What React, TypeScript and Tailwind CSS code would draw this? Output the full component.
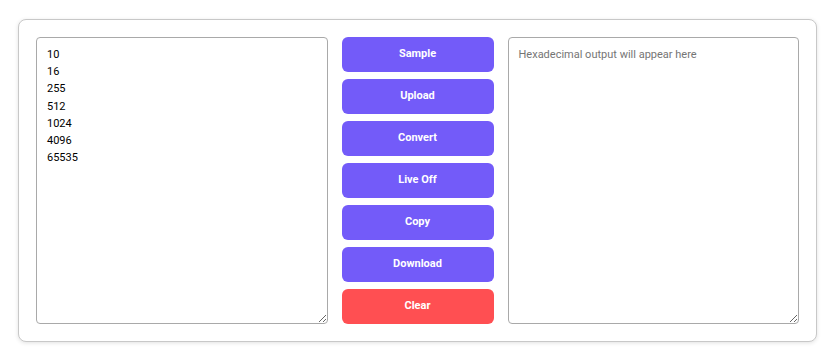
const numbers = ['10', '16', '255', '512', '1024', '4096', '65535'].join('\n');

const buttons = ['Sample', 'Upload', 'Convert', 'Live Off', 'Copy', 'Download'];

export default function App() {
  return (
    <div className="min-h-screen bg-white px-[18px] pt-[19px] font-['Roboto',sans-serif]">
      <div className="rounded-lg border border-[#c8c8c8] bg-white p-[17px] shadow-[0_1px_4px_rgba(0,0,0,0.12)]">
        <div className="grid h-[287px] grid-cols-[1fr_152px_1fr] gap-[14px]">
          <textarea
            className="h-full w-full resize-y rounded border border-[#a9a9a9] px-[10px] py-[8px] text-[11px] leading-[17.2px] text-black outline-none"
            defaultValue={numbers}
          />
          <div className="flex flex-col gap-[7px]">
            {buttons.map((label) => (
              <button
                key={label}
                className="h-[35px] rounded-md bg-[#735bf9] text-[11px] font-bold text-white"
              >
                {label}
              </button>
            ))}
            <button className="h-[35px] rounded-md bg-[#ff4f52] text-[11px] font-bold text-white">
              Clear
            </button>
          </div>
          <textarea
            className="h-full w-full resize-y rounded border border-[#a9a9a9] px-[10px] py-[8px] text-[11px] leading-[17.2px] text-black outline-none placeholder:text-[#757575]"
            placeholder="Hexadecimal output will appear here"
            readOnly
          />
        </div>
      </div>
    </div>
  );
}
